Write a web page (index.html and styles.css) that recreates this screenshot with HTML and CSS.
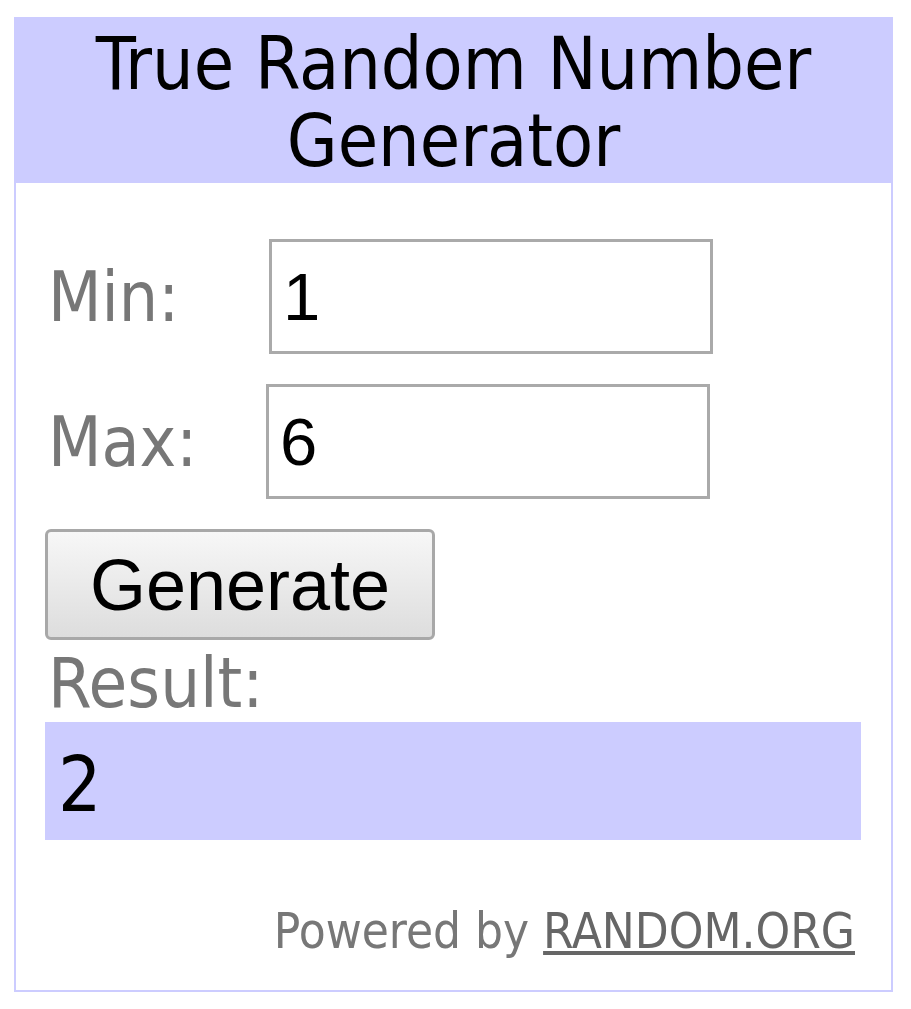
FILE: index.html
```html
<!DOCTYPE html>
<html lang="en">
  <head>
    <meta charset="UTF-8" />
    <meta name="viewport" content="width=device-width, initial-scale=1.0" />
    <title>True Random Number Generator</title>
    <link rel="stylesheet" href="styles.css">
  </head>
  <body>
    <div class="widget">
      <div class="widget-title">True Random Number<br>Generator</div>
      <div class="widget-body">
        <div class="field">
          <label for="min">Min:</label>
          <input id="min" type="text" value="1">
        </div>
        <div class="field field-max">
          <label for="max">Max:</label>
          <input id="max" type="text" value="6">
        </div>
        <button class="generate">Generate</button>
        <div class="result-label">Result:</div>
        <div class="result">2</div>
        <div class="powered">Powered by <a href="#">RANDOM.ORG</a></div>
      </div>
    </div>
  </body>
</html>
```
FILE: styles.css
```css
body {
  margin: 0;
  background-color: white;
}
.widget {
  box-sizing: border-box;
  width: 879px;
  margin: 17px 0 0 14px;
  border: 2px solid #ccccff;
  font-family: "DejaVu Sans Condensed", "DejaVu Sans", sans-serif;
}
.widget-title {
  background-color: #ccccff;
  text-align: center;
  font-size: 73px;
  line-height: 77px;
  color: black;
  padding: 6px 0 4px 0;
}
.widget-body {
  padding: 56px 30px 28px 29px;
}
.field {
  display: grid;
  grid-template-columns: 224px 444px;
  align-items: center;
  margin-bottom: 30px;
}
.field-max {
  grid-template-columns: 221px 444px;
}
.field label {
  font-size: 69px;
  color: #777;
  padding-left: 3px;
}
.field input {
  box-sizing: border-box;
  width: 444px;
  height: 115px;
  border: 3px solid #aaa;
  padding: 0 0 0 11px;
  font-family: "Liberation Sans", Arial, sans-serif;
  font-size: 67px;
  color: black;
  outline: none;
}
.generate {
  box-sizing: border-box;
  display: block;
  width: 390px;
  height: 111px;
  margin-top: 1px;
  border: 3px solid #a8a8a8;
  border-radius: 6px;
  background: linear-gradient(#f7f7f7, #dddddd);
  font-family: "Liberation Sans", Arial, sans-serif;
  font-size: 72px;
  color: black;
  padding: 0;
}
.result-label {
  margin-top: 4px;
  font-size: 70px;
  line-height: 78px;
  color: #777;
  padding-left: 3px;
}
.result {
  box-sizing: border-box;
  height: 118px;
  background-color: #ccccff;
  padding-left: 13px;
  font-size: 76px;
  line-height: 125px;
  color: black;
}
.powered {
  margin-top: 62px;
  text-align: right;
  padding-right: 6px;
  font-size: 49px;
  line-height: 60px;
  color: #777;
}
.powered a {
  color: #666;
  text-decoration: underline;
}
```
